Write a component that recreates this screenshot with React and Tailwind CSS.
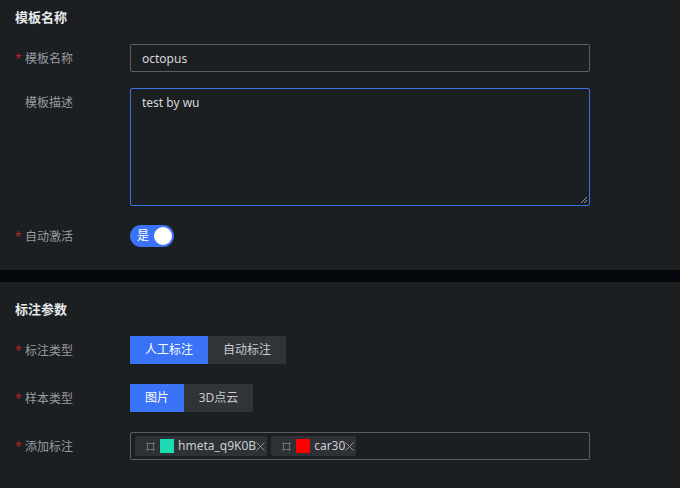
import React from "react";

const font = { fontFamily: '"Noto Sans", "Noto Sans CJK SC", sans-serif' };

function Label({ children, required }) {
  return (
    <div className="w-[130px] shrink-0 flex items-center pl-[15px] pt-[2px] text-[12px] text-[#979ba0]">
      <span className={"w-[10px] text-[#b3262b] text-[12px] " + (required ? "" : "invisible")}>*</span>
      <span>{children}</span>
    </div>
  );
}

function DragIcon() {
  return (
    <svg width="9" height="9" viewBox="0 0 9 9" className="shrink-0">
      <rect x="1.5" y="1.5" width="6" height="6" fill="none" stroke="#6b6f74" strokeWidth="1" />
      <path d="M0 1.5h1.5M7.5 1.5H9M0 7.5h1.5M7.5 7.5H9M1.5 0v1.5M7.5 0v1.5M1.5 7.5V9M7.5 7.5V9" stroke="#6b6f74" strokeWidth="1" />
    </svg>
  );
}

function Tag({ color, text }) {
  return (
    <div className="h-[20px] flex items-center bg-[#2e3135] rounded-[2px] pl-[11px] pr-[2px] text-[12px] text-[#c9ccd0]">
      <DragIcon />
      <span className="w-[14px] h-[14px] ml-[5px] mr-[4px]" style={{ background: color }} />
      <span>{text}</span>
      <svg width="9" height="9" viewBox="0 0 9 9">
        <path d="M0.5 0.5L8.5 8.5M8.5 0.5L0.5 8.5" stroke="#8d9196" strokeWidth="1" />
      </svg>
    </div>
  );
}

export default function App() {
  return (
    <div className="w-[680px] h-[488px] bg-[#1c1f22] overflow-hidden" style={font}>
      <div className="h-[270px] pt-[7px]">
        <div className="pl-[15px] text-[13px] font-bold text-[#e8eaec] leading-[20px]">模板名称</div>
        <div className="flex mt-[17px] h-[28px]">
          <Label required>模板名称</Label>
          <div className="w-[460px] h-[28px] border border-[#5b5e62] rounded-[2px] flex items-center px-[11px] pt-[1px] text-[12px] text-[#d5d8db]">octopus</div>
        </div>
        <div className="flex mt-[16px]">
          <div className="w-[130px] shrink-0 h-[28px] flex items-center">
            <Label>模板描述</Label>
          </div>
          <div className="relative w-[460px] h-[118px] border border-[#3c6fe8] rounded-[2px] px-[11px] pt-[5px] text-[12px] text-[#d5d8db]">
            test by wu
            <svg width="8" height="8" viewBox="0 0 8 8" className="absolute right-[1px] bottom-[1px]">
              <path d="M7 1L1 7M7 4L4 7" stroke="#9a9ea3" strokeWidth="1" />
            </svg>
          </div>
        </div>
        <div className="flex mt-[16px] h-[28px] items-center">
          <Label required>自动激活</Label>
          <div className="w-[44px] h-[22px] rounded-full bg-[#3a73f6] flex items-center justify-between pl-[7px] pr-[2px]">
            <span className="text-[12px] text-white leading-none">是</span>
            <span className="w-[18px] h-[18px] rounded-full bg-white" />
          </div>
        </div>
      </div>
      <div className="h-[12px] bg-[#03060a]" />
      <div className="pt-[17px]">
        <div className="pl-[15px] text-[13px] font-bold text-[#e8eaec] leading-[20px]">标注参数</div>
        <div className="flex mt-[17px] h-[28px]">
          <Label required>标注类型</Label>
          <div className="flex text-[12px]">
            <div className="w-[78px] h-[28px] bg-[#3a73f6] text-white flex items-center justify-center">人工标注</div>
            <div className="w-[78px] h-[28px] bg-[#303337] text-[#c9ccd0] flex items-center justify-center">自动标注</div>
          </div>
        </div>
        <div className="flex mt-[20px] h-[28px]">
          <Label required>样本类型</Label>
          <div className="flex text-[12px]">
            <div className="w-[54px] h-[28px] bg-[#3a73f6] text-white flex items-center justify-center">图片</div>
            <div className="w-[69px] h-[28px] bg-[#303337] text-[#c9ccd0] flex items-center justify-center">3D点云</div>
          </div>
        </div>
        <div className="flex mt-[20px] h-[28px]">
          <Label required>添加标注</Label>
          <div className="w-[460px] h-[28px] border border-[#5b5e62] rounded-[2px] flex items-center gap-[4px] px-[4px]">
            <Tag color="#1cdcb4" text="hmeta_q9K0B" />
            <Tag color="#ff0000" text="car30" />
          </div>
        </div>
      </div>
    </div>
  );
}
